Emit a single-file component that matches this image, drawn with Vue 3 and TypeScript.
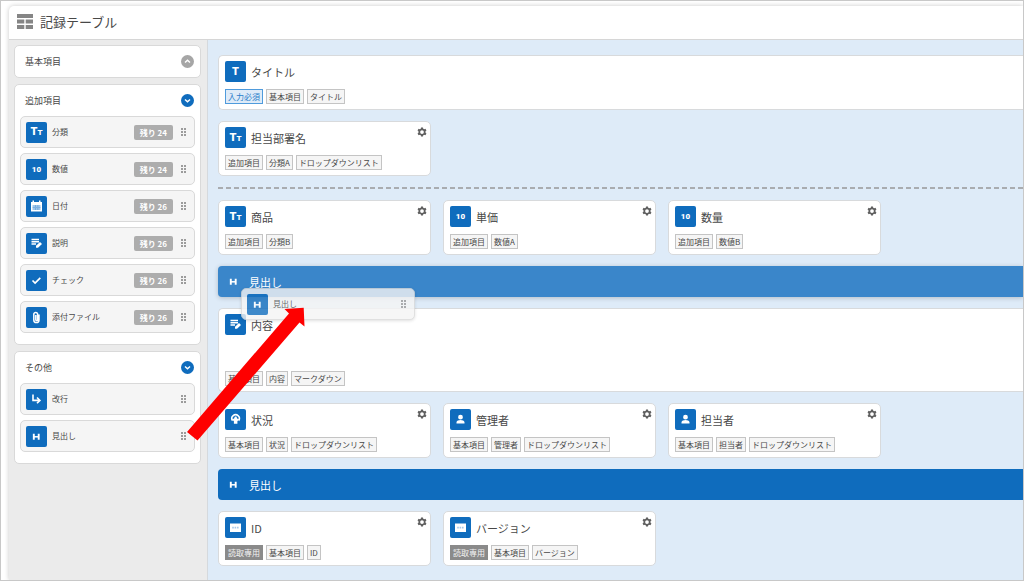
<script setup lang="ts">
import { h, ref } from 'vue'

type IconName = 'T' | 'Tt' | 'num' | 'date' | 'note' | 'check' | 'clip' | 'break' | 'head' | 'status' | 'user' | 'box'
interface PaletteItem { icon: IconName; label: string; left?: number }
interface Group { title: string; open: boolean; items: PaletteItem[] }
interface Tag { text: string; kind?: 'required' | 'readonly' }
interface Field { icon: IconName; title: string; tags: Tag[] }
type Block =
  | { kind: 'fields'; fields: Field[]; wide?: boolean; tall?: boolean }
  | { kind: 'break' }
  | { kind: 'heading'; title: string; dropping?: boolean }

const groups = ref<Group[]>([
  { title: '基本項目', open: false, items: [] },
  {
    title: '追加項目',
    open: true,
    items: [
      { icon: 'Tt', label: '分類', left: 24 },
      { icon: 'num', label: '数値', left: 24 },
      { icon: 'date', label: '日付', left: 26 },
      { icon: 'note', label: '説明', left: 26 },
      { icon: 'check', label: 'チェック', left: 26 },
      { icon: 'clip', label: '添付ファイル', left: 26 },
    ],
  },
  {
    title: 'その他',
    open: true,
    items: [
      { icon: 'break', label: '改行' },
      { icon: 'head', label: '見出し' },
    ],
  },
])

const tags = (...names: string[]): Tag[] => names.map((text) => ({ text }))
const required: Tag = { text: '入力必須', kind: 'required' }
const readonly: Tag = { text: '読取専用', kind: 'readonly' }

const blocks: Block[] = [
  {
    kind: 'fields',
    wide: true,
    fields: [{ icon: 'T', title: 'タイトル', tags: [required, ...tags('基本項目', 'タイトル')] }],
  },
  {
    kind: 'fields',
    fields: [{ icon: 'Tt', title: '担当部署名', tags: tags('追加項目', '分類A', 'ドロップダウンリスト') }],
  },
  { kind: 'break' },
  {
    kind: 'fields',
    fields: [
      { icon: 'Tt', title: '商品', tags: tags('追加項目', '分類B') },
      { icon: 'num', title: '単価', tags: tags('追加項目', '数値A') },
      { icon: 'num', title: '数量', tags: tags('追加項目', '数値B') },
    ],
  },
  { kind: 'heading', title: '見出し', dropping: true },
  {
    kind: 'fields',
    wide: true,
    tall: true,
    fields: [{ icon: 'note', title: '内容', tags: tags('基本項目', '内容', 'マークダウン') }],
  },
  {
    kind: 'fields',
    fields: [
      { icon: 'status', title: '状況', tags: tags('基本項目', '状況', 'ドロップダウンリスト') },
      { icon: 'user', title: '管理者', tags: tags('基本項目', '管理者', 'ドロップダウンリスト') },
      { icon: 'user', title: '担当者', tags: tags('基本項目', '担当者', 'ドロップダウンリスト') },
    ],
  },
  { kind: 'heading', title: '見出し' },
  {
    kind: 'fields',
    fields: [
      { icon: 'box', title: 'ID', tags: [readonly, ...tags('基本項目', 'ID')] },
      { icon: 'box', title: 'バージョン', tags: [readonly, ...tags('基本項目', 'バージョン')] },
    ],
  },
]

const stroke = (d: string, width: number, color = '#fff') =>
  h('path', { d, fill: 'none', stroke: color, 'stroke-width': width })
const solid = (d: string, color = '#fff') => h('path', { d, fill: color, 'fill-rule': 'evenodd' })

const shapes: Partial<Record<IconName, () => ReturnType<typeof h>[]>> = {
  head: () => [stroke('M7.8 7.8v6M12.7 7.8v6', 1.9), stroke('M7.8 10.8h5', 1.5)],
  date: () => [
    solid('M5 6h1.5V4.5H8V6h5V4.5h1.5V6H16v9.5H5z'),
    solid('M6.5 9h8v5h-8z', '#9fc6ea'),
    solid('M6.5 11.2h8v.6h-8zM9 9h.6v5H9zM11.6 9h.6v5h-.6z', '#5a9ad6'),
  ],
  note: () => [
    stroke('M5.5 6.5h7.500M5.500 8.700h7.500M5.500 10.900h4.500', 1.5),
    solid('M10 12.800l4-3.800 2 2-4 3.800h-2z'),
  ],
  check: () => [stroke('M6.500 10.500l2.600 2.600 5.200-5.200', 1.7)],
  clip: () => [
    stroke('M13 7.500v5.500a2.600 2.600 0 0 1-5.200 0V7.300a1.900 1.900 0 0 1 3.800 0v5.400a.9.9 0 0 1-1.800 0V8', 1.5),
  ],
  break: () => [stroke('M7 5.500v5.900h7M11 8.500l2.900 2.900-2.900 2.900', 1.6)],
  status: () => [
    stroke('M7.600 11.600a3.900 3.500 0 1 1 6 0', 1.6),
    solid('M6.500 9.800h2.500l.9-2.300h1.500l.9 2.300h2.400l-2.300 2.400v2.500H8.900v-2.500z'),
  ],
  user: () => [
    solid('M10.5 5.8a2.4 2.4 0 1 1 0 4.8 2.4 2.400 0 0 1 0-4.8zM6.500 14.500v-1.200c0-1.500 2.300-2.300 4-2.300s4 .8 4 2.300v1.200z'),
  ],
  box: () => [
    solid('M5 6.500h11v8.500H5z'),
    h('path', { d: 'M7.200 10.700h6.800', stroke: '#a5c8ea', 'stroke-width': 1.8, 'stroke-dasharray': '1.6 .8' }),
  ],
}

const TypeIcon = (props: { name: IconName }) => {
  if (props.name === 'T') return h('b', 'T')
  if (props.name === 'Tt') return h('b', ['T', h('small', 'T')])
  if (props.name === 'num') return h('b', { class: 'num' }, '10')
  return h('svg', { viewBox: '0 0 21 21', width: 21, height: 21, 'aria-hidden': 'true' }, shapes[props.name]!())
}
TypeIcon.props = ['name']

const Grip = () =>
  h(
    'svg',
    { viewBox: '0 0 5 8', width: 5, height: 8, 'aria-hidden': 'true' },
    [0, 3, 6].flatMap((y) => [0, 3].map((x) => h('rect', { x, y, width: 2, height: 2, fill: '#9c9c9c' }))),
  )
</script>

<template>
  <div class="frame">
    <div class="window">
      <header class="bar">
        <svg width="16" height="16" viewBox="0 0 16 16" aria-hidden="true">
          <path
            d="M0 0h16v4H0zM0 5.500h7.300v4H0zM8.700 5.500H16v4H8.700zM0 11h7.300v4H0zM8.700 11H16v4H8.700z"
            fill="#858585"
          />
        </svg>
        <h1>記録テーブル</h1>
      </header>
      <div class="columns">
        <aside class="side">
          <section v-for="g in groups" :key="g.title" class="group">
            <div class="group-head">
              <h2>{{ g.title }}</h2>
              <button
                type="button"
                class="toggle"
                :class="{ open: g.open }"
                :aria-expanded="g.open"
                :aria-label="g.title"
                @click="g.open = !g.open"
              >
                <svg width="13" height="13" viewBox="0 0 13 13" fill="none" stroke="#fff" stroke-width="1.5">
                  <path :d="g.open ? 'M4 5.500l2.500 2.200L9 5.500' : 'M4 7.500l2.500-2.200L9 7.500'" />
                </svg>
              </button>
            </div>
            <ul v-if="g.open" class="items">
              <li v-for="it in g.items" :key="it.label" class="item">
                <span class="type"><TypeIcon class="glyph" :name="it.icon" /></span>
                <span class="name">{{ it.label }}</span>
                <span v-if="it.left" class="left">残り {{ it.left }}</span>
                <Grip class="grip" />
              </li>
            </ul>
          </section>
        </aside>

        <main class="canvas">
          <template v-for="(b, i) in blocks" :key="i">
            <hr v-if="b.kind === 'break'" class="line-break" />
            <div v-else-if="b.kind === 'heading'" class="heading" :class="{ dropping: b.dropping }">
              <TypeIcon name="head" />
              <h2>{{ b.title }}</h2>
              <div v-if="b.dropping" class="item ghost">
                <span class="type"><TypeIcon class="glyph" name="head" /></span>
                <span class="name">{{ b.title }}</span>
                <Grip class="grip" />
              </div>
            </div>
            <div v-else class="row" :class="{ wide: b.wide, tall: b.tall }">
              <article v-for="f in b.fields" :key="f.title" class="field">
                <div class="field-top">
                  <span class="type"><TypeIcon class="glyph" :name="f.icon" /></span>
                  <h3>{{ f.title }}</h3>
                  <button v-if="!b.wide" type="button" class="gear" :aria-label="f.title + 'の設定'">
                    <svg viewBox="0 0 24 24" width="10" height="10" fill="none" stroke="#606060">
                      <circle cx="12" cy="12" r="6.5" stroke-width="4" />
                      <path
                        d="M12 1v5M12 18v5M2.500 6.500l4.300 2.500M17.200 15l4.300 2.500M2.500 17.500L6.800 15M17.200 9l4.300-2.500"
                        stroke-width="5"
                      />
                    </svg>
                  </button>
                </div>
                <ul class="tags">
                  <li v-for="t in f.tags" :key="t.text" :class="t.kind">{{ t.text }}</li>
                </ul>
              </article>
            </div>
          </template>
        </main>
      </div>
    </div>
    <svg class="arrow" width="120" height="142" viewBox="0 0 120 142" aria-hidden="true">
      <path d="M2 132L104 13.500 99.500 9 118.700 7.700 119.500 26.500 114.500 22.500 12.500 140.500z" fill="#fe0000" />
    </svg>
  </div>
</template>

<style>
html,
body {
  margin: 0;
  background: #fff;
}
</style>

<style scoped>
.frame {
  position: relative;
  box-sizing: border-box;
  min-height: 100vh;
  padding: 5px 0 0 8px;
  border: 1px solid #c8c8c8;
  display: flex;
  overflow: hidden;
  color: #484848;
  font: 8px/12px "Noto Sans CJK JP", "Noto Sans", sans-serif;
}
h1, h2, h3, ul, hr {
  margin: 0;
  padding: 0;
  font-weight: 400;
  list-style: none;
}
button {
  border: 0;
  padding: 0;
  cursor: pointer;
}
svg {
  display: block;
  flex: none;
}
.window {
  flex: 1;
  min-width: 0;
  display: flex;
  flex-direction: column;
  border-radius: 5px 0 0 0;
  box-shadow: 0 0 5px rgba(0, 0, 0, 0.22);
}
.bar {
  box-sizing: border-box;
  display: flex;
  align-items: center;
  gap: 7px;
  height: 34px;
  padding: 0 0 2px 8px;
  border-bottom: 1px solid #d6d6d6;
}
.bar h1 {
  font-size: 13px;
  line-height: 20px;
}
.columns {
  flex: 1;
  display: flex;
}
.side {
  flex: none;
  box-sizing: border-box;
  width: 199px;
  padding: 5px 6px 5px 5px;
  display: flex;
  flex-direction: column;
  gap: 6px;
  background: #ebebeb;
  border-right: 1px solid #d5d9dd;
}
.group {
  padding: 0 5px;
  border: 1px solid #d9d9d9;
  border-radius: 5px;
  background: #fff;
}
.group-head {
  display: flex;
  align-items: center;
  justify-content: space-between;
  height: 31px;
  padding: 0 1px 0 5px;
}
.group-head h2 {
  font-size: 9px;
}
.toggle {
  width: 13px;
  height: 13px;
  border-radius: 50%;
  background: #a6a6a6;
}
.toggle.open {
  background: #0f6cbd;
}
.items {
  display: flex;
  flex-direction: column;
  gap: 5px;
  padding-bottom: 11px;
}
.item {
  box-sizing: border-box;
  display: flex;
  align-items: center;
  height: 32px;
  padding: 0 8px 0 5px;
  border: 1px solid #d9d9d9;
  border-radius: 5px;
  background: #f5f5f5;
}
.type {
  flex: none;
  display: flex;
  align-items: center;
  justify-content: center;
  width: 21px;
  height: 21px;
  border-radius: 2px;
  background: #0f6cbd;
}
b.glyph {
  color: #fff;
  font: 900 11px/21px Roboto, "Liberation Sans", sans-serif;
}
b.glyph :deep(small) {
  font-size: 8px;
}
b.glyph.num {
  font-size: 8px;
}
.name {
  margin-left: 5px;
}
.left {
  margin-left: auto;
  padding: 1px 6px;
  border-radius: 2px;
  background: #adadad;
  color: #fff;
  font-weight: 700;
  line-height: 13px;
}
.grip {
  margin-left: auto;
}
.left + .grip {
  margin-left: 8px;
}
.canvas {
  flex: 1;
  min-width: 0;
  display: flex;
  flex-direction: column;
  gap: 11px;
  padding: 15px 0 14px 10px;
  background: #deebf8;
}
.row {
  display: flex;
  gap: 12px;
}
.field {
  box-sizing: border-box;
  width: 213px;
  min-height: 55px;
  display: flex;
  flex-direction: column;
  justify-content: space-between;
  padding: 5px 3px 5px 6px;
  border: 1px solid #d8dadc;
  border-radius: 5px;
  background: #fff;
}
.wide .field {
  flex: 1;
  border-right: 0;
  border-radius: 5px 0 0 5px;
}
.tall .field {
  min-height: 84px;
}
.field-top {
  display: flex;
  align-items: center;
}
.field h3 {
  margin-left: 5px;
  font-size: 11px;
  line-height: 16px;
}
.gear {
  align-self: flex-start;
  margin-left: auto;
  background: none;
}
.tags {
  display: flex;
  gap: 3px;
}
.tags li {
  padding: 0 2px;
  border: 1px solid #c4c4c4;
  background: #f5f5f5;
  line-height: 13px;
}
.tags .required {
  border-color: #4f9bdc;
  background: #deebf8;
  color: #2b7fcb;
}
.tags .readonly {
  border-color: #8a8a8a;
  background: #8a8a8a;
  color: #f2f2f2;
}
.line-break {
  border: 0;
  height: 2px;
  background: repeating-linear-gradient(90deg, #a9acb0 0 5px, transparent 5px 8px);
}
.heading {
  position: relative;
  display: flex;
  align-items: center;
  gap: 5px;
  height: 31px;
  padding-left: 5px;
  border-radius: 4px 0 0 4px;
  background: #0f6cbd;
  color: #fff;
}
.heading h2 {
  font-size: 11px;
  line-height: 16px;
}
.heading.dropping {
  background: #3a86ca;
  box-shadow: 0 1px 5px rgba(0, 0, 0, 0.2);
}
.ghost {
  position: absolute;
  z-index: 1;
  top: 22px;
  left: 23px;
  width: 174px;
  color: #484848;
  box-shadow: 0 1px 3px rgba(0, 0, 0, 0.15);
  opacity: 0.8;
}
.arrow {
  position: absolute;
  z-index: 2;
  top: 299px;
  left: 184px;
  pointer-events: none;
}
</style>
